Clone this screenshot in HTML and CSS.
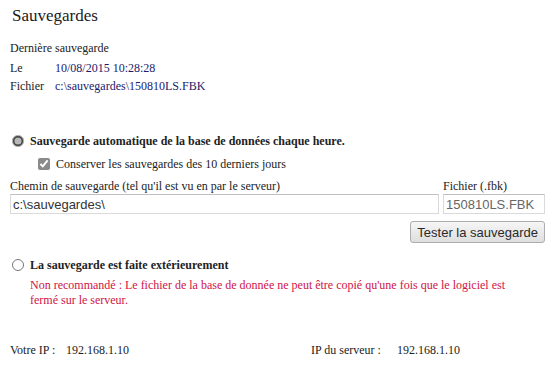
FILE: index.html
```html
<!DOCTYPE html>
<html lang="fr">
<head>
    <meta charset="UTF-8">
    <title>Sauvegardes</title>
    <link rel="stylesheet" href="styles.css">
</head>
<body>
    <div class="page">
        <h1>Sauvegardes</h1>

        <div class="last-backup">
            <div class="last-title">Dernière sauvegarde</div>
            <div class="info-row"><span class="info-label">Le</span><span class="info-value">10/08/2015 10:28:28</span></div>
            <div class="info-row"><span class="info-label">Fichier</span><span class="info-value">c:\sauvegardes\150810LS.FBK</span></div>
        </div>

        <div class="option">
            <label class="option-title"><input type="radio" name="mode" class="radio" checked> Sauvegarde automatique de la base de données chaque heure.</label>
            <label class="keep"><input type="checkbox" class="check" checked> Conserver les sauvegardes des 10 derniers jours</label>
            <div class="paths">
                <div class="field field-path">
                    <label for="path">Chemin de sauvegarde (tel qu'il est vu en par le serveur)</label>
                    <input type="text" id="path" value="c:\sauvegardes\">
                </div>
                <div class="field field-file">
                    <label for="file">Fichier (.fbk)</label>
                    <input type="text" id="file" value="150810LS.FBK">
                </div>
            </div>
            <div class="actions">
                <button>Tester la sauvegarde</button>
            </div>
        </div>

        <div class="option option-ext">
            <label class="option-title"><input type="radio" name="mode" class="radio"> La sauvegarde est faite extérieurement</label>
            <p class="warning">Non recommandé : Le fichier de la base de donnée ne peut être copié qu'une fois que le logiciel est fermé sur le serveur.</p>
        </div>

        <div class="footer">
            <span>Votre IP :</span><span>192.168.1.10</span>
            <span>IP du serveur :</span><span>192.168.1.10</span>
        </div>
    </div>
</body>
</html>
```

FILE: styles.css
```css
body {
    margin: 0;
    font-family: 'Liberation Serif', 'Times New Roman', serif;
    font-size: 12px;
    color: #222;
    background: #fff;
}
.page {
    padding: 5px 10px 0 10px;
    width: 535px;
}
h1 {
    font-family: 'Liberation Serif', 'Times New Roman', serif;
    font-size: 17px;
    font-weight: normal;
    margin: 0 0 12px 2px;
    line-height: 22px;
    color: #1a1a1a;
}
.last-backup {
    line-height: 18px;
}
.last-title {
    margin-bottom: 2px;
}
.info-row {
    display: flex;
}
.info-label {
    width: 45px;
}
.info-value {
    color: #1c1a6b;
}
.option {
    margin-top: 38px;
}
.option-title {
    display: flex;
    align-items: center;
    font-weight: bold;
    line-height: 16px;
    height: 16px;
}
.radio {
    margin: 0 6px 0 2px;
    width: 12px;
    height: 12px;
    accent-color: #b8b8b8;
}
.keep {
    display: flex;
    align-items: center;
    margin: 7px 0 0 28px;
    line-height: 16px;
    height: 16px;
}
.check {
    margin: 0 6px 0 0;
    width: 12px;
    height: 12px;
    accent-color: #8a8a8a;
}
.paths {
    display: flex;
    gap: 4px;
    margin-top: 7px;
}
.field {
    display: flex;
    flex-direction: column;
}
.field label {
    line-height: 15px;
}
.field-path {
    flex: 1;
}
.field-file {
    width: 102px;
}
input[type="text"] {
    font-family: 'Liberation Sans', Arial, sans-serif;
    font-size: 13px;
    color: #333;
    height: 20px;
    box-sizing: border-box;
    padding: 0 2px;
    border: 1px solid #dadada;
    border-top-color: #c0c0c0;
    outline: none;
}
.field-file input {
    color: #666;
}
.actions {
    display: flex;
    justify-content: flex-end;
    margin-top: 7px;
}
button {
    font-family: 'Liberation Sans', Arial, sans-serif;
    font-size: 13px;
    color: #2a2a2a;
    height: 22px;
    padding: 0 6px;
    border: 1px solid #adadad;
    border-radius: 3px;
    background: linear-gradient(#f6f6f6, #dedede);
}
.option-ext {
    margin-top: 14px;
}
.warning {
    color: #d11245;
    margin: 5px 0 0 20px;
    line-height: 15px;
    max-width: 495px;
}
.footer {
    display: grid;
    grid-template-columns: 56px 245px 86px auto;
    margin-top: 34px;
    line-height: 16px;
}
```
